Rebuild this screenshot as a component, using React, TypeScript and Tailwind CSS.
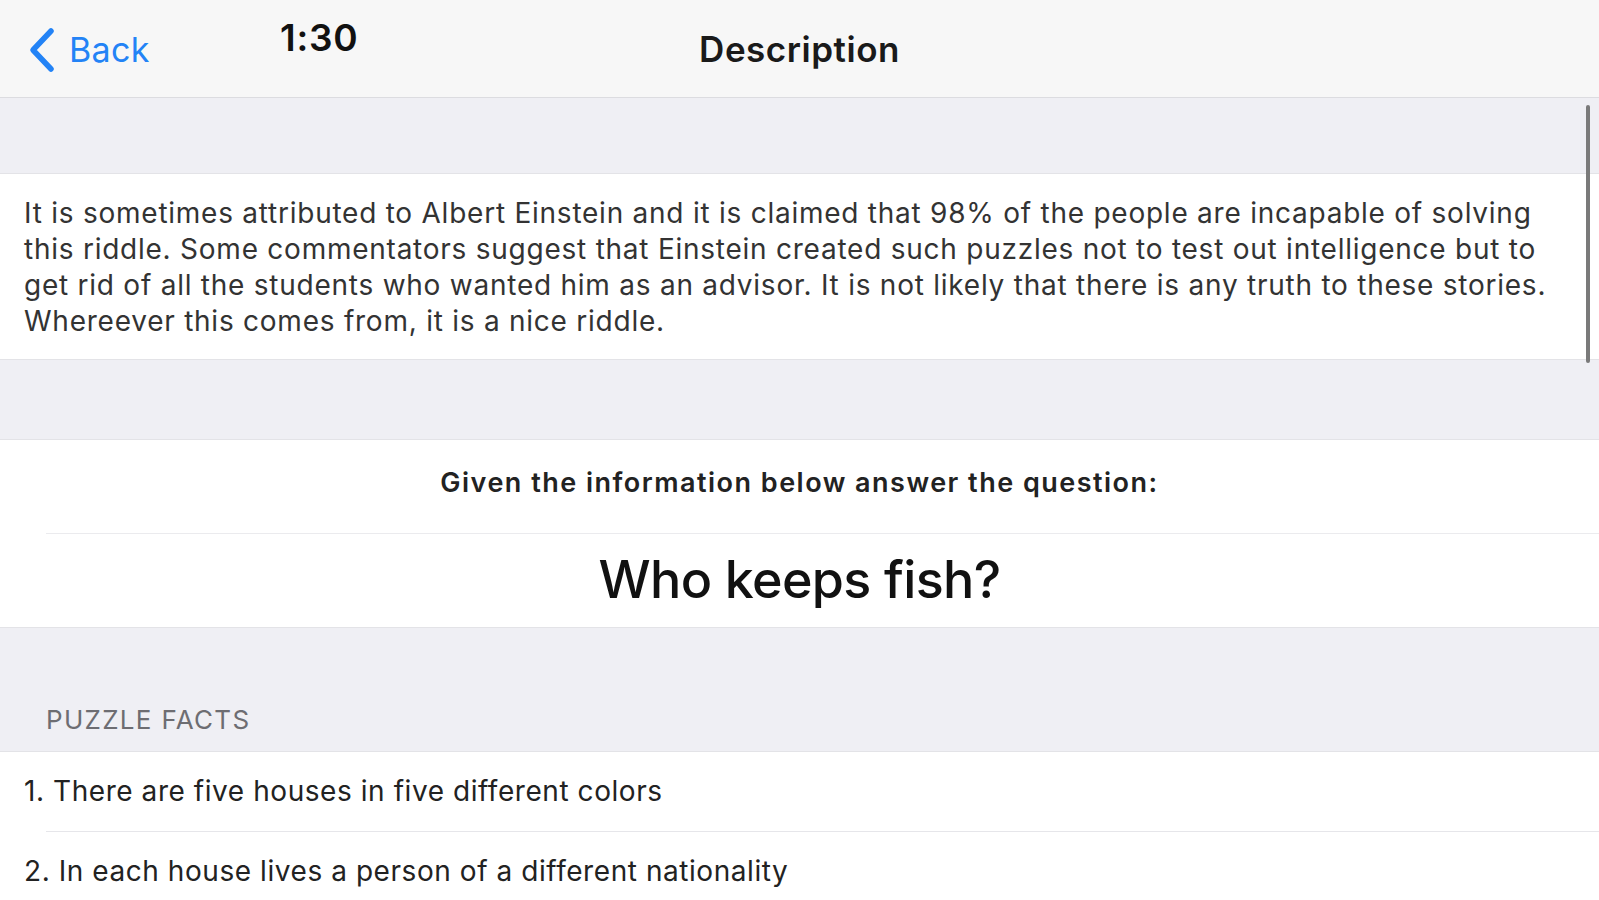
import { ReactNode } from 'react'

const facts = [
  'There are five houses in five different colors',
  'In each house lives a person of a different nationality',
]

const descriptionLines = [
  'It is sometimes attributed to Albert Einstein and it is claimed that 98% of the people are incapable of solving',
  'this riddle. Some commentators suggest that Einstein created such puzzles not to test out intelligence but to',
  'get rid of all the students who wanted him as an advisor. It is not likely that there is any truth to these stories.',
  'Whereever this comes from, it is a nice riddle.',
]

function Section({ children, className = '' }: { children: ReactNode; className?: string }) {
  return <div className={`bg-white border-y border-[#e3e3e7] ${className}`}>{children}</div>
}

export default function App() {
  return (
    <div
      className="w-[1599px] h-[900px] overflow-hidden bg-[#efeff4] relative"
      style={{ fontFamily: 'Inter, "Liberation Sans", Arial, sans-serif' }}
    >
      {/* Nav bar */}
      <div className="h-[98px] bg-[#f7f7f7] border-b border-[#dcdce0] relative flex items-center">
        <button className="flex items-center gap-[12px] pl-[27px] pt-[2px] text-[#2383f6]">
          <svg width="30" height="46" viewBox="0 0 30 46" fill="none">
            <polyline
              points="24,4 6,23 24,42"
              stroke="#2383f6"
              strokeWidth="5.5"
              strokeLinecap="round"
              strokeLinejoin="round"
            />
          </svg>
          <span className="text-[34px] leading-none tracking-[0.01em]">Back</span>
        </button>
        <div className="absolute left-[280px] top-[19px] text-[37px] font-semibold leading-none tracking-[0.02em] text-[#111]">
          1:30
        </div>
        <div className="absolute inset-x-0 top-0 h-full flex items-center justify-center pt-[2px] pointer-events-none">
          <span className="text-[35px] font-semibold tracking-[0.015em] text-[#1a1a1a]">Description</span>
        </div>
      </div>

      <div className="h-[75px]" />

      {/* Description */}
      <Section className="pt-[21px] pb-[20px] px-[24px]">
        <p className="text-[28px] leading-[36px] tracking-[0.027em] text-[#333]">
          {descriptionLines.map((l) => (
            <span key={l} className="block whitespace-nowrap">
              {l}
            </span>
          ))}
        </p>
      </Section>

      <div className="h-[79px]" />

      {/* Question */}
      <Section>
        <div className="h-[93px] flex items-center justify-center pb-[6px]">
          <span className="text-[27px] font-semibold tracking-[0.055em] text-[#222]">
            Given the information below answer the question:
          </span>
        </div>
        <div className="ml-[46px] border-t border-[#ebebee]" />
        <div className="h-[93px] flex items-center justify-center pb-[2px]">
          <span className="text-[52px] font-medium tracking-[-0.012em] text-[#111]">Who keeps fish?</span>
        </div>
      </Section>

      {/* Puzzle facts */}
      <div className="h-[123px] flex items-end px-[46px] pb-[15px]">
        <span className="text-[26px] leading-[32px] tracking-[0.05em] text-[#6d6d72]">PUZZLE FACTS</span>
      </div>
      <div className="bg-white border-t border-[#e3e3e7]">
        {facts.map((f, i) => (
          <div key={f} className="h-[80px] flex items-center pl-[24px] pb-[2px] relative">
            <span className="text-[28px] leading-[34px] tracking-[0.02em] text-[#222] whitespace-nowrap">
              {i + 1}. {f}
            </span>
            {i === 0 && <div className="absolute left-[46px] right-0 bottom-0 border-b border-[#e6e6ea]" />}
          </div>
        ))}
      </div>

      {/* scroll indicator */}
      <div className="absolute left-[1586px] top-[105px] w-[4px] h-[258px] rounded-full bg-[#7a7a7a]" />
    </div>
  )
}
